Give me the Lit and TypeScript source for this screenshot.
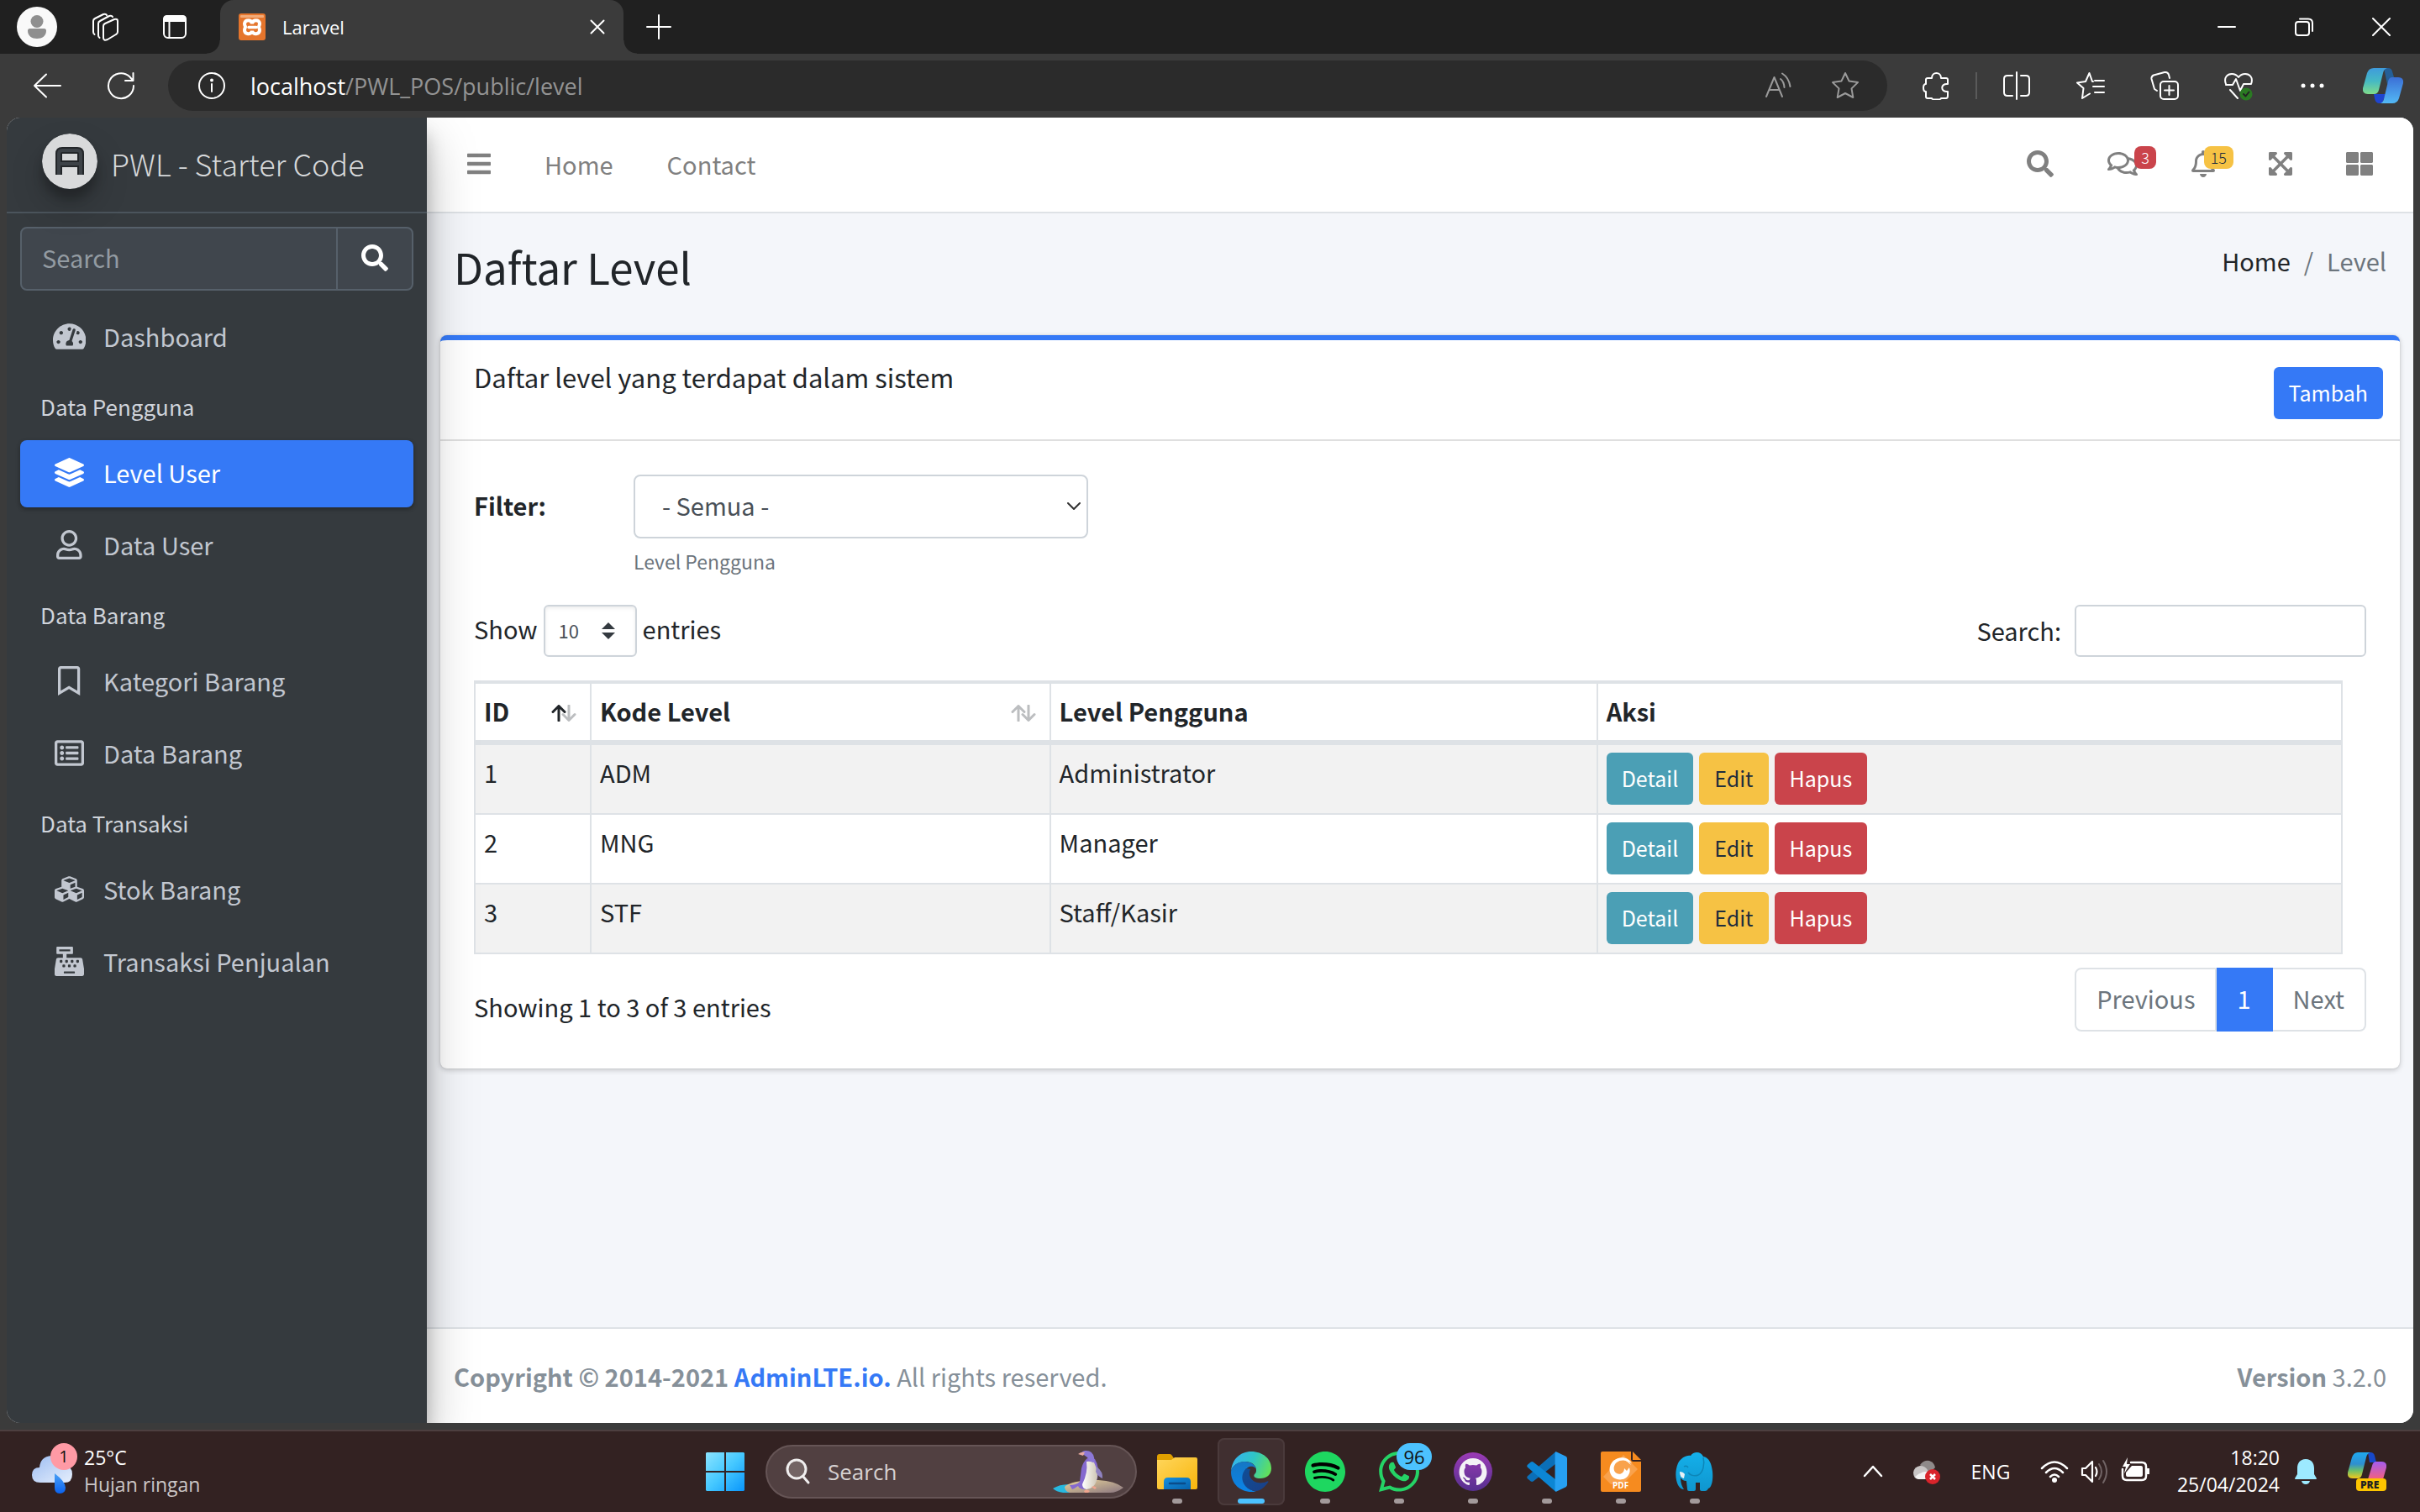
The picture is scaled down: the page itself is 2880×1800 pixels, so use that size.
import { LitElement, html, svg, css, nothing } from "lit";
import { customElement } from "lit/decorators.js";

/* ---------- Solid and outline glyphs, drawn on a W x 512 grid ---------- */
const GLYPHS: Record<string, [number, string]> = {
  search: [512, "M505 442.7L405.3 343c-4.5-4.5-10.6-7-17-7H372c27.6-35.3 44-79.7 44-128C416 93.1 322.9 0 208 0S0 93.1 0 208s93.1 208 208 208c48.3 0 92.7-16.4 128-44v16.3c0 6.4 2.5 12.5 7 17l99.7 99.7c9.4 9.4 24.6 9.4 33.9 0l28.3-28.3c9.4-9.4 9.4-24.6.1-34zM208 336c-70.7 0-128-57.2-128-128 0-70.7 57.2-128 128-128 70.7 0 128 57.2 128 128 0 70.7-57.2 128-128 128z"],
  bars: [448, "M16 132h416c8.837 0 16-7.163 16-16V76c0-8.837-7.163-16-16-16H16C7.163 60 0 67.163 0 76v40c0 8.837 7.163 16 16 16zm0 160h416c8.837 0 16-7.163 16-16v-40c0-8.837-7.163-16-16-16H16c-8.837 0-16 7.163-16 16v40c0 8.837 7.163 16 16 16zm0 160h416c8.837 0 16-7.163 16-16v-40c0-8.837-7.163-16-16-16H16c-8.837 0-16 7.163-16 16v40c0 8.837 7.163 16 16 16z"],
  grid: [512, "M296 32h192c13.255 0 24 10.745 24 24v160c0 13.255-10.745 24-24 24H296c-13.255 0-24-10.745-24-24V56c0-13.255 10.745-24 24-24zm-80 0H24C10.745 32 0 42.745 0 56v160c0 13.255 10.745 24 24 24h192c13.255 0 24-10.745 24-24V56c0-13.255-10.745-24-24-24zM0 296v160c0 13.255 10.745 24 24 24h192c13.255 0 24-10.745 24-24V296c0-13.255-10.745-24-24-24H24c-13.255 0-24 10.745-24 24zm296 184h192c13.255 0 24-10.745 24-24V296c0-13.255-10.745-24-24-24H296c-13.255 0-24 10.745-24 24v160c0 13.255 10.745 24 24 24z"],
  expand: [448, "M448 344v112a23.94 23.94 0 0 1-24 24H312c-21.39 0-32.09-25.9-17-41l36.2-36.2L224 295.6 116.77 402.9 153 439c15.09 15.1 4.39 41-17 41H24a23.94 23.94 0 0 1-24-24V344c0-21.4 25.89-32.1 41-17l36.19 36.2L184.46 256 77.18 148.7 41 185c-15.1 15.1-41 4.4-41-17V56a23.94 23.94 0 0 1 24-24h112c21.39 0 32.09 25.9 17 41l-36.2 36.2L224 216.4l107.23-107.3L295 73c-15.09-15.1-4.39-41 17-41h112a23.94 23.94 0 0 1 24 24v112c0 21.4-25.89 32.1-41 17l-36.19-36.2L263.54 256l107.28 107.3L407 327.1c15.1-15.2 41-4.5 41 16.9z"],
  bell: [448, "M439.39 362.29c-19.32-20.76-55.47-51.99-55.47-154.29 0-77.7-54.48-139.9-127.94-155.16V32c0-17.67-14.32-32-31.98-32s-31.98 14.33-31.98 32v20.84C118.56 68.1 64.08 130.3 64.08 208c0 102.3-36.15 133.53-55.47 154.29-6 6.45-8.66 14.16-8.61 21.71.11 16.4 12.98 32 32.1 32h383.8c19.12 0 32-15.6 32.1-32 .05-7.55-2.61-15.27-8.61-21.71zM67.53 368c21.22-27.97 44.42-74.33 44.53-159.42 0-.2-.06-.38-.06-.58 0-61.86 50.14-112 112-112s112 50.14 112 112c0 .2-.06.38-.06.58.11 85.1 23.31 131.46 44.53 159.42H67.53zM224 512c35.32 0 63.97-28.65 63.97-64H160.03c0 35.35 28.65 64 63.97 64z"],
  comments: [576, "M532 386.2c27.5-27.1 44-61.1 44-98.2 0-80-76.5-146.1-176.2-157.9C368.3 72.5 294.3 32 208 32 93.1 32 0 103.6 0 192c0 37 16.5 71 44 98.2-15.3 30.7-37.3 54.5-37.7 54.9-6.3 6.7-8.1 16.5-4.4 25 3.6 8.5 12 14 21.2 14 53.5 0 96.7-20.2 125.2-38.8 9.2 2.1 18.7 3.7 28.4 4.9C208.1 407.6 281.8 448 368 448c20.8 0 40.8-2.4 59.8-6.8C456.3 459.7 499.4 480 553 480c9.2 0 17.5-5.5 21.2-14 3.6-8.5 1.9-18.3-4.4-25-.4-.3-22.5-24.1-37.8-54.8zm-392.8-92.3L122.1 305c-14.1 9.1-28.5 16.3-43.1 21.4 2.7-4.7 5.4-9.7 8-14.8l15.5-31.1L77.7 256C64.2 242.6 48 220.7 48 192c0-60.7 73.3-112 160-112s160 51.3 160 112-73.3 112-160 112c-16.5 0-33-1.9-49-5.6l-19.8-4.5zM498.3 352l-24.7 24.4 15.5 31.1c2.6 5.1 5.3 10.1 8 14.8-14.6-5.1-29-12.3-43.1-21.4l-17.1-11.1-19.9 4.6c-16 3.7-32.5 5.6-49 5.6-54 0-102.2-20.1-131.3-49.7C338 339.5 416 272.9 416 192c0-3.4-.4-6.7-.7-10C479.7 196.5 528 238.8 528 288c0 28.7-16.2 50.6-29.7 64z"],
  layers: [512, "M12.41 148.02l232.94 105.67c6.8 3.09 14.49 3.09 21.29 0l232.94-105.67c16.55-7.51 16.55-32.52 0-40.03L266.65 2.31a25.607 25.607 0 0 0-21.29 0L12.41 107.98c-16.55 7.51-16.55 32.53 0 40.04zm487.18 88.28l-58.09-26.33-161.64 73.27c-7.56 3.43-15.59 5.17-23.86 5.17s-16.29-1.74-23.86-5.17L70.51 209.97l-58.1 26.33c-16.55 7.5-16.55 32.5 0 40l232.94 105.59c6.8 3.08 14.49 3.08 21.29 0L499.59 276.3c16.55-7.5 16.55-32.5 0-40zm0 127.8l-57.87-26.23-161.86 73.37c-7.56 3.43-15.59 5.17-23.86 5.17s-16.29-1.74-23.86-5.17L70.29 337.87 12.41 364.1c-16.55 7.5-16.55 32.5 0 40l232.94 105.59c6.8 3.08 14.49 3.08 21.29 0L499.59 404.1c16.55-7.5 16.55-32.5 0-40z"],
  gauge: [576, "M288 32C128.94 32 0 160.94 0 320c0 52.8 14.25 102.26 39.06 144.8 5.61 9.62 16.3 15.2 27.44 15.2h443c11.14 0 21.83-5.58 27.44-15.2C561.75 422.26 576 372.8 576 320c0-159.06-128.94-288-288-288zm0 64c14.71 0 26.58 10.13 30.32 23.65-1.11 2.26-2.64 4.23-3.45 6.67l-9.22 27.67c-5.13 3.49-10.97 6.01-17.64 6.01-17.67 0-32-14.33-32-32S270.33 96 288 96zM96 384c-17.67 0-32-14.33-32-32s14.33-32 32-32 32 14.33 32 32-14.33 32-32 32zm48-160c-17.67 0-32-14.33-32-32s14.33-32 32-32 32 14.33 32 32-14.33 32-32 32zm246.77-72.41l-61.33 184C343.13 347.33 352 364.54 352 384c0 11.72-3.38 22.55-8.88 32H232.88c-5.5-9.45-8.88-20.28-8.88-32 0-33.94 26.5-61.43 59.9-63.59l61.34-184.01c4.17-12.56 17.73-19.45 30.36-15.17 12.57 4.19 19.35 17.79 15.17 30.36zm14.66 57.2l15.52-46.55c3.47-1.29 7.13-2.23 11.05-2.23 17.67 0 32 14.33 32 32s-14.33 32-32 32c-11.38-.01-20.89-6.28-26.57-15.22zM480 384c-17.67 0-32-14.33-32-32s14.33-32 32-32 32 14.33 32 32-14.33 32-32 32z"],
  user: [448, "M313.6 304c-28.7 0-42.5 16-89.6 16-47.1 0-60.8-16-89.6-16C60.2 304 0 364.2 0 438.4V464c0 26.5 21.5 48 48 48h352c26.5 0 48-21.5 48-48v-25.6c0-74.2-60.2-134.4-134.4-134.4zM400 464H48v-25.6c0-47.6 38.8-86.4 86.4-86.4 14.6 0 38.3 16 89.6 16 51.7 0 74.9-16 89.6-16 47.6 0 86.4 38.8 86.4 86.4V464zM224 288c79.5 0 144-64.5 144-144S303.5 0 224 0 80 64.5 80 144s64.5 144 144 144zm0-240c52.9 0 96 43.1 96 96s-43.1 96-96 96-96-43.1-96-96 43.1-96 96-96z"],
  bookmark: [384, "M336 0H48C21.49 0 0 21.49 0 48v464l192-112 192 112V48c0-26.51-21.49-48-48-48zm0 428.43l-144-84-144 84V54a6 6 0 0 1 6-6h276c3.314 0 6 2.683 6 5.996V428.43z"],
  list: [512, "M464 32H48C21.49 32 0 53.49 0 80v352c0 26.51 21.49 48 48 48h416c26.51 0 48-21.49 48-48V80c0-26.51-21.49-48-48-48zm-6 400H54a6 6 0 0 1-6-6V86a6 6 0 0 1 6-6h404a6 6 0 0 1 6 6v340a6 6 0 0 1-6 6zm-42-92v24c0 6.627-5.373 12-12 12H204c-6.627 0-12-5.373-12-12v-24c0-6.627 5.373-12 12-12h200c6.627 0 12 5.373 12 12zm0-96v24c0 6.627-5.373 12-12 12H204c-6.627 0-12-5.373-12-12v-24c0-6.627 5.373-12 12-12h200c6.627 0 12 5.373 12 12zm0-96v24c0 6.627-5.373 12-12 12H204c-6.627 0-12-5.373-12-12v-24c0-6.627 5.373-12 12-12h200c6.627 0 12 5.373 12 12zm-252 12c0 19.882-16.118 36-36 36s-36-16.118-36-36 16.118-36 36-36 36 16.118 36 36zm0 96c0 19.882-16.118 36-36 36s-36-16.118-36-36 16.118-36 36-36 36 16.118 36 36zm0 96c0 19.882-16.118 36-36 36s-36-16.118-36-36 16.118-36 36-36 36 16.118 36 36z"],
  cubes: [512, "M488.6 250.2L392 214V105.5c0-15-9.3-28.4-23.4-33.7l-100-37.5c-8.1-3.1-17.1-3.1-25.3 0l-100 37.5c-14.1 5.3-23.4 18.7-23.4 33.7V214l-96.6 36.2C9.3 255.5 0 268.9 0 283.9V394c0 13.6 7.7 26.1 19.9 32.2l100 50c10.1 5.1 22.1 5.1 32.2 0l103.9-52 103.9 52c10.1 5.1 22.1 5.1 32.2 0l100-50c12.2-6.1 19.9-18.6 19.9-32.2V283.9c0-15-9.3-28.4-23.4-33.7zM358 214.8l-85 31.9v-68.2l85-37v73.3zM154 104.1l102-38.2 102 38.2v.6l-102 41.4-102-41.4v-.6zm84 291.1l-85 42.5v-79.1l85-38.8v75.4zm0-112l-102 41.4-102-41.4v-.6l102-38.2 102 38.2v.6zm240 112l-85 42.5v-79.1l85-38.8v75.4zm0-112l-102 41.4-102-41.4v-.6l102-38.2 102 38.2v.6z"],
  register: [512, "M511.1 378.8l-26.7-160c-2.6-15.4-15.9-26.7-31.6-26.7H208v-64h96c8.8 0 16-7.2 16-16V16c0-8.8-7.2-16-16-16H48c-8.8 0-16 7.2-16 16v96c0 8.8 7.2 16 16 16h96v64H59.1c-15.6 0-29 11.3-31.6 26.7L.8 378.7c-.6 3.5-.9 7-.9 10.5V480c0 17.7 14.3 32 32 32h448c17.7 0 32-14.3 32-32v-90.7c.1-3.5-.2-7-.8-10.5zM280 248c0-8.8 7.2-16 16-16h16c8.8 0 16 7.2 16 16v16c0 8.8-7.2 16-16 16h-16c-8.8 0-16-7.2-16-16v-16zm-32 64h16c8.8 0 16 7.2 16 16v16c0 8.8-7.2 16-16 16h-16c-8.8 0-16-7.2-16-16v-16c0-8.8 7.2-16 16-16zm-32-80c8.8 0 16 7.2 16 16v16c0 8.8-7.2 16-16 16h-16c-8.8 0-16-7.2-16-16v-16c0-8.8 7.2-16 16-16h16zM80 80V48h192v32H80zm40 200h-16c-8.8 0-16-7.2-16-16v-16c0-8.8 7.2-16 16-16h16c8.8 0 16 7.2 16 16v16c0 8.8-7.2 16-16 16zm16 64v-16c0-8.8 7.2-16 16-16h16c8.8 0 16 7.2 16 16v16c0 8.8-7.2 16-16 16h-16c-8.8 0-16-7.2-16-16zm216 112c0 4.4-3.6 8-8 8H168c-4.4 0-8-3.6-8-8v-16c0-4.4 3.6-8 8-8h176c4.4 0 8 3.6 8 8v16zm24-112c0 8.8-7.2 16-16 16h-16c-8.8 0-16-7.2-16-16v-16c0-8.8 7.2-16 16-16h16c8.8 0 16 7.2 16 16v16zm48-80c0 8.8-7.2 16-16 16h-16c-8.8 0-16-7.2-16-16v-16c0-8.8 7.2-16 16-16h16c8.8 0 16 7.2 16 16v16z"],
};

const glyph = (name: string) => {
  const [w, d] = GLYPHS[name];
  return html`<svg class="glyph" viewBox="0 0 ${w} 512" fill="currentColor" aria-hidden="true"><path d=${d}></path></svg>`;
};

/* Line icon on a square grid, sized in pixels. */
const line = (size: number, body: unknown) =>
  html`<svg class="line" width=${size} height=${size} viewBox="0 0 ${size} ${size}" aria-hidden="true">${body}</svg>`;

const base = css`
  *, *::before, *::after { box-sizing: border-box; }
  button, input, select { font: inherit; color: inherit; margin: 0; }
  button { border: 0; background: none; padding: 0; }
  a { color: inherit; text-decoration: none; }
  svg { display: block; flex: none; }
  .line { fill: none; stroke: currentColor; stroke-width: 2; stroke-linecap: round; stroke-linejoin: round; }
`;

/* ======================= Browser frame ======================= */
@customElement("browser-bar")
class BrowserBar extends LitElement {
  static styles = [base, css`
    :host { display: block; font-family: "Open Sans", "Noto Sans", sans-serif; color: #fff; }
    .titlebar { display: flex; height: 64px; background: #202020; }
    .cell { display: grid; place-items: center; flex: none; }
    .w72 { width: 72px; }
    .w80 { width: 80px; }
    .w84 { width: 84px; }
    .w88 { width: 88px; }
    .w92 { width: 92px; }
    .w96 { width: 96px; }
    .tab { position: relative; display: flex; align-items: center; width: 480px; margin-left: 6px; padding: 0 22px; background: #3b3b3b; border-radius: 16px 16px 0 0; font-size: 22px; }
    .tab::before, .tab::after { content: ""; position: absolute; bottom: 0; width: 16px; height: 16px; }
    .tab::before { left: -16px; background: radial-gradient(circle at 0 0, transparent 15px, #3b3b3b 16px); }
    .tab::after { right: -16px; background: radial-gradient(circle at 100% 0, transparent 15px, #3b3b3b 16px); }
    .tab-title { flex: 1; margin-left: 20px; }
    .spacer { flex: 1; }
    .toolbar { display: flex; align-items: center; height: 76px; padding: 0 4px 0 12px; background: #3b3b3b; }
    .address { display: flex; align-items: center; flex: 1; height: 60px; margin: 0 14px 0 12px; padding: 0 10px 0 36px; border-radius: 30px; background: #2b2b2b; font-size: 27px; }
    .url { flex: 1; margin-left: 30px; color: #939393; }
    .host { color: #fff; }
    .muted { color: #9a9a9a; }
    .divider { width: 2px; height: 32px; margin: 0 3px; background: #5a5a5a; }
  `];

  render() {
    return html`
      <div class="titlebar">
        <button class="cell w88" aria-label="Profile">
          <svg width="48" height="48" viewBox="0 0 48 48"><circle cx="24" cy="24" r="24" fill="#f9f9f9"></circle><circle cx="24" cy="17.500" r="7.500" fill="#8f8f8f"></circle><path d="M13 28.500q0-2.500 2.500-2.500h17q2.500 0 2.500 2.500C35 35 30 38 24 38S13 35 13 28.500Z" fill="#8f8f8f"></path></svg>
        </button>
        <button class="cell w72" aria-label="Workspaces">
          ${line(34, svg`<path d="M16 16q0-2 2-3l11-5q4-1 4 2v13q0 2-2 3l-10 6q-5 2-5-2ZM10 27V13q0-2 2-3l11-6q3-1 4 1M4 23V10q0-2 2-3l10-5q3-1 4 1M4 23q0 2 1.500 3M10 27q0 2 1.500 3"></path>`)}
        </button>
        <button class="cell w96" aria-label="Tab actions">
          ${line(30, svg`<rect x="2" y="2" width="26" height="26" rx="5"></rect><path d="M2 8V6q0-4 4-4h18q4 0 4 4v2Z" fill="currentColor"></path><path d="M8.500 8v20"></path>`)}
        </button>
        <div class="tab">
          <svg width="32" height="32" viewBox="0 0 32 32"><rect width="32" height="32" rx="3" fill="#e5752c"></rect><rect x="2" y="2" width="28" height="3" rx="1" fill="#f2ab78"></rect><path d="M16 12c-1-5-8-5-9 0 0 3 1 3 1 4s-1 2-1 4c0 5 8 6 9 1 1 5 9 4 9-1 0-2-1-3-1-4s1-2 1-4c0-5-8-5-9 0Z" fill="none" stroke="#fff" stroke-width="4"></path><path d="M12 16.500h9" stroke="#fff" stroke-width="3.500" stroke-linecap="round"></path></svg>
          <span class="tab-title">Laravel</span>
          <button aria-label="Close tab">${line(18, svg`<path d="M1.500 1.500l15 15M16.500 1.500l-15 15"></path>`)}</button>
        </div>
        <button class="cell w84" aria-label="New tab">${line(30, svg`<path d="M15 1v28M1 15h28"></path>`)}</button>
        <div class="spacer"></div>
        <button class="cell w92" aria-label="Minimize">${line(22, svg`<path d="M1 11h20"></path>`)}</button>
        <button class="cell w92" aria-label="Restore">${line(22, svg`<rect x="1" y="5" width="16" height="16" rx="3"></rect><path d="M6 1.500h10q5 0 5 5V16"></path>`)}</button>
        <button class="cell w92" aria-label="Close">${line(22, svg`<path d="M1 1l20 20M21 1 1 21"></path>`)}</button>
      </div>
      <div class="toolbar">
        <button class="cell w88" aria-label="Back">${line(34, svg`<path d="M33 17H2M16 3.500 2 17l14 13.500"></path>`)}</button>
        <button class="cell w88" aria-label="Refresh">${line(34, svg`<path d="M32 17A15 15 0 1 1 27 6l4 4.500M31.500 2v9H22"></path>`)}</button>
        <div class="address">
          ${line(32, svg`<circle cx="16" cy="16" r="15"></circle><path d="M16 14v9"></path><circle cx="16" cy="9.500" r="1" fill="currentColor"></circle>`)}
          <span class="url"><span class="host">localhost</span>/PWL_POS/public/level</span>
          <button class="cell w80 muted" aria-label="Read aloud">${line(32, svg`<path d="M2 29 11.500 6 21 29M5.500 21h12M19 8q4 3 4.500 10M21 1.500q8 5 9.500 15.500"></path>`)}</button>
          <button class="cell w80 muted" aria-label="Add to favorites">${line(34, svg`<path d="M17 2l4.600 9.600 10.400 1.500-7.500 7.300 1.800 10.600L17 26l-9.300 5 1.800-10.600L2 13.100l10.400-1.500Z"></path>`)}</button>
        </div>
        <button class="cell w88" aria-label="Extensions">${line(34, svg`<path d="M7 8h5c0-8 11-8 11 0h6q2 0 2 2v5c-9-1-9 10 0 9v5q0 3-2 3h-6c0 2-11 2-11 0H7q-2 0-2-2v-6c-4 0-4-9 0-9v-5q0-2 2-2Z"></path>`)}</button>
        <span class="divider"></span>
        <button class="cell w88" aria-label="Split screen">${line(34, svg`<path d="M17 1v32M12 5H6Q2 5 2 9v16q0 4 4 4h6M22 5h6q4 0 4 4v16q0 4-4 4h-6"></path>`)}</button>
        <button class="cell w88" aria-label="Favorites">${line(34, svg`<path d="M20 12h-1L15.500 2 11 12 1 13.500 8.500 20 7 32l9-5.500M22 11h11M20 18h13M22 25h11"></path>`)}</button>
        <button class="cell w88" aria-label="Collections">${line(34, svg`<rect x="12" y="12" width="21" height="21" rx="4"></rect><path d="M22.500 17v11M17 22.500h11M8 23 5 21 1.500 9Q1 6 4 4.500L17 1q4-.5 5 3l1 4"></path>`)}</button>
        <button class="cell w88" aria-label="Browser essentials">${line(36, svg`<path d="M3 16C0 8 5 4 10 4q5 0 8 4 3-4 8-4c5 0 10 4 7 12M3 17h8l4-7 5 14 4-8h9M8 23l9 10"></path><circle cx="27" cy="28" r="7.500" fill="#2a7a22" stroke="none"></circle><path d="M24 28l2.500 2.500 4-5" stroke="#222" stroke-width="2"></path>`)}</button>
        <button class="cell w88" aria-label="Settings and more">${line(30, svg`<g fill="currentColor" stroke="none"><circle cx="4" cy="15" r="2.500"></circle><circle cx="15" cy="15" r="2.500"></circle><circle cx="26" cy="15" r="2.500"></circle></g>`)}</button>
        <button class="cell w80" aria-label="Copilot">
          <svg width="50" height="44" viewBox="0 0 50 44">
            <defs>
              <linearGradient id="ca" x1="0" y1="0" x2="0" y2="1"><stop offset="0" stop-color="#3f9bdc"></stop><stop offset=".5" stop-color="#45b9c4"></stop><stop offset="1" stop-color="#7fdb8b"></stop></linearGradient>
              <linearGradient id="cb" x1="0" y1="0" x2="0" y2="1"><stop offset="0" stop-color="#3b6fd6"></stop><stop offset="1" stop-color="#53b9f5"></stop></linearGradient>
            </defs>
            <path d="M26 1h5q4 0 5 4l2 7h7L30 20Z" fill="#255f97"></path>
            <path d="M24 43h-3q-5 0-6-6l-1-5h14Z" fill="#1f45cf"></path>
            <path d="M14 1h16q-4 1-5 6l-5 20q-1 5-6 5H7q-7 0-6-7L6 7q2-6 8-6Z" fill="url(#ca)"></path>
            <path d="M36 12h7q7 0 6 7l-5 18q-2 6-8 6H22q3-1 4-5l5-21q1-5 5-5Z" fill="url(#cb)"></path>
          </svg>
        </button>
      </div>`;
  }
}

/* ======================= Admin page ======================= */
type NavEntry = { header: string } | { label: string; icon: string; active?: boolean };

const NAV: NavEntry[] = [
  { label: "Dashboard", icon: "gauge" },
  { header: "Data Pengguna" },
  { label: "Level User", icon: "layers", active: true },
  { label: "Data User", icon: "user" },
  { header: "Data Barang" },
  { label: "Kategori Barang", icon: "bookmark" },
  { label: "Data Barang", icon: "list" },
  { header: "Data Transaksi" },
  { label: "Stok Barang", icon: "cubes" },
  { label: "Transaksi Penjualan", icon: "register" },
];

const LEVELS = [
  { id: 1, code: "ADM", name: "Administrator" },
  { id: 2, code: "MNG", name: "Manager" },
  { id: 3, code: "STF", name: "Staff/Kasir" },
];

@customElement("admin-page")
class AdminPage extends LitElement {
  static styles = [base, css`
    :host { display: flex; flex: 1; margin: 0 8px 8px; border-radius: 16px; overflow: hidden; background: #f4f6fa; color: #212529; font: 29px/48px "Noto Sans CJK JP", "Noto Sans CJK SC", sans-serif; }

    .sidebar { position: relative; z-index: 2; flex: none; width: 500px; background: #353a3e; color: #c2c7d0; box-shadow: 0 28px 56px rgba(0,0,0,.25), 0 20px 20px rgba(0,0,0,.22); }
    .brand { display: flex; align-items: center; gap: 16px; height: 114px; padding: 0 0 8px 42px; border-bottom: 2px solid #4b545c; font-size: 36px; font-weight: 300; color: #d6d8da; }
    .brand-name { padding-top: 4px; }
    .brand-logo { border-radius: 50%; box-shadow: 0 20px 40px rgba(0,0,0,.19), 0 12px 12px rgba(0,0,0,.23); }
    .side-search { display: flex; height: 76px; margin: 16px; border: 2px solid #56606a; border-radius: 8px; background: #40464d; overflow: hidden; }
    .side-search input { flex: 1; min-width: 0; border: 0; padding: 0 0 4px 24px; background: none; color: #fff; }
    .side-search input::placeholder { color: #939ba2; opacity: 1; }
    .side-search button { display: grid; place-items: center; width: 90px; border-left: 2px solid #56606a; color: #fff; padding-bottom: 2px; }
    .side-search .glyph { height: 32px; }
    .menu { list-style: none; margin: 0; padding: 0 16px; }
    .menu-header { height: 76px; padding: 12px 24px; font-size: 26px; color: #d0d4db; }
    .menu-item { padding-bottom: 6px; }
    .menu-link { display: flex; align-items: center; gap: 14px; height: 80px; padding: 0 32px; border-radius: 8px; }
    .menu-link.active { background: #3579f6; color: #fff; box-shadow: 0 2px 6px rgba(0,0,0,.12), 0 2px 4px rgba(0,0,0,.24); }
    .menu-icon { display: grid; place-items: center; width: 53px; height: 40px; padding-bottom: 4px; }
    .menu-icon .glyph { height: 35px; }
    .menu-text { padding-bottom: 4px; }

    .main { display: flex; flex-direction: column; flex: 1; min-width: 0; }
    .navbar { display: flex; align-items: center; justify-content: space-between; height: 114px; padding: 0 16px; background: #fff; border-bottom: 2px solid #dee2e6; color: #808080; }
    .nav-group { display: flex; }
    .nav-link { position: relative; display: flex; align-items: center; height: 80px; padding: 0 32px 2px; }
    .nav-link .glyph { height: 32px; }
    .badge { position: absolute; top: 18px; right: 10px; padding: 0 8px; border-radius: 8px; font-size: 18px; line-height: 27px; font-weight: 300; }
    .badge.danger { background: #ca444b; color: #fff; }
    .badge.warning { background: #f6c244; color: #1f2d3d; }

    .content-header { display: flex; justify-content: space-between; padding: 28px 32px 32px; }
    h1 { margin: 0; font-size: 51px; line-height: 70px; font-weight: 400; }
    .breadcrumb { display: flex; gap: 16px; margin: 0; padding: 4px 0 0; list-style: none; color: #6c757d; }
    .breadcrumb a { color: #212529; }

    .card { margin: 15px 16px 0; border-top: 6px solid #3579f6; border-radius: 8px; background: #fff; box-shadow: 0 0 2px rgba(0,0,0,.13), 0 2px 6px rgba(0,0,0,.2); }
    .card-header { display: flex; justify-content: space-between; align-items: flex-start; padding: 22px 20px 24px 40px; border-bottom: 2px solid #dfdfdf; }
    .card-title { margin: 0; font-size: 31px; line-height: 44px; font-weight: 400; }
    .btn { height: 62px; padding: 0 18px 2px; border-radius: 6px; font-size: 25px; line-height: 42px; color: #fff; }
    .btn.primary { background: #3579f6; margin-top: 10px; }
    .btn.detail { background: #4b9fb5; }
    .btn.edit { background: #f6c244; color: #1f2d3d; }
    .btn.delete { background: #ca444b; }
    .card-body { padding: 40px; }

    .filter { display: grid; grid-template-columns: 190px minmax(0, 541px); margin-bottom: 32px; }
    .filter label { padding-top: 12px; font-weight: 700; }
    .select { position: relative; display: block; }
    .select select { width: 100%; appearance: none; border: 2px solid #ced4da; border-radius: 8px; background: #fff; color: #495057; }
    .select svg { position: absolute; pointer-events: none; }
    .select.large select { height: 76px; padding: 0 32px 4px; }
    .select.large svg { right: 8px; top: 32px; color: #303030; }
    .help { margin-top: 8px; font-size: 23px; line-height: 39px; color: #6c757d; }

    .controls { display: flex; justify-content: space-between; align-items: center; height: 62px; margin-bottom: 28px; }
    .length { display: flex; align-items: center; gap: 7px; }
    .length label { padding-bottom: 6px; }
    .select.small { width: 111px; }
    .select.small select { display: block; height: 62px; padding: 0 16px 2px; border-radius: 6px; font-size: 22px; box-shadow: inset 0 2px 4px rgba(0,0,0,.08); }
    .select.small svg { right: 26px; top: 21px; }
    .finder { display: flex; align-items: center; gap: 16px; }
    .finder label { padding-bottom: 2px; }
    .finder input { width: 347px; height: 62px; padding: 0 16px; border: 2px solid #ced4da; border-radius: 6px; background: #fff; }

    .table-wrap { padding-right: 28px; }
    table { width: 100%; table-layout: fixed; border-collapse: separate; border-spacing: 0; border-top: 2px solid #dee2e6; border-right: 2px solid #dee2e6; }
    .c-id { width: 138px; }
    .c-code { width: 24.6%; }
    .c-name { width: 29.3%; }
    th, td { padding: 8px 10px 11px; border-left: 2px solid #dee2e6; border-bottom: 2px solid #dee2e6; text-align: left; vertical-align: top; }
    th { border-top: 2px solid #dee2e6; border-bottom-width: 6px; font-weight: 700; }
    td:last-child { padding: 9px 10px 10px; }
    tbody tr:nth-child(odd) { background: #f2f2f2; }
    .th-inner { display: flex; justify-content: space-between; align-items: center; padding-right: 6px; }
    .sort { color: #bcbec0; stroke-width: 3; margin-top: 6px; }
    .sort .on { stroke: #212529; }
    .actions { display: flex; gap: 7px; }

    .summary { display: flex; justify-content: space-between; align-items: center; margin-top: 16px; padding-bottom: 4px; }
    .status { padding-top: 16px; }
    .pages { display: flex; margin: 0; padding: 0; list-style: none; color: #6c757d; }
    .page { display: block; height: 76px; padding: 10px 24px; border: 2px solid #dee2e6; border-left-width: 0; background: #fff; }
    .page.first { border-left-width: 2px; border-radius: 8px 0 0 8px; }
    .page.last { border-radius: 0 8px 8px 0; }
    .page.current { border-color: #3579f6; background: #3579f6; color: #fff; }

    .spacer { flex: 1; }
    .footer { display: flex; justify-content: space-between; height: 114px; padding: 32px; background: #fff; border-top: 2px solid #dee2e6; color: #869099; }
    .footer a { color: #3579f6; }
  `];

  private navEntry(e: NavEntry) {
    if ("header" in e) return html`<li class="menu-header">${e.header}</li>`;
    return html`<li class="menu-item">
      <a class="menu-link ${e.active ? "active" : ""}" href="#"><span class="menu-icon">${glyph(e.icon)}</span><span class="menu-text">${e.label}</span></a>
    </li>`;
  }

  private sort(ascending: boolean) {
    return html`<svg class="line sort" width="30" height="20" viewBox="0 0 30 20" aria-hidden="true">
      <path d="M21 1v17M14 11.500l7 7 7-7"></path><path class=${ascending ? "on" : ""} d="M9 19V2M2 8.500l7-7 7 7"></path></svg>`;
  }

  render() {
    return html`
      <aside class="sidebar">
        <a class="brand" href="#">
          <svg class="brand-logo" width="66" height="66" viewBox="0 0 66 66"><circle cx="33" cy="33" r="33" fill="#d9dadb"></circle><path d="M20 49V24q0-4 4-4h18q4 0 4 4v25M20 36h26" fill="none" stroke="#232629" stroke-width="8"></path><path d="M20 49V24q0-4 4-4h18q4 0 4 4v25M20 36h26" fill="none" stroke="#3d4247" stroke-width="4"></path></svg>
          <span class="brand-name">PWL - Starter Code</span>
        </a>
        <form class="side-search"><input type="search" placeholder="Search" aria-label="Search"><button type="button" aria-label="Search">${glyph("search")}</button></form>
        <ul class="menu">${NAV.map((e) => this.navEntry(e))}</ul>
      </aside>
      <div class="main">
        <nav class="navbar">
          <div class="nav-group">
            <a class="nav-link" href="#" aria-label="Menu">${glyph("bars")}</a>
            <a class="nav-link" href="#">Home</a>
            <a class="nav-link" href="#">Contact</a>
          </div>
          <div class="nav-group">
            <a class="nav-link" href="#" aria-label="Search">${glyph("search")}</a>
            <a class="nav-link" href="#">${glyph("comments")}<span class="badge danger">3</span></a>
            <a class="nav-link" href="#">${glyph("bell")}<span class="badge warning">15</span></a>
            <a class="nav-link" href="#" aria-label="Fullscreen">${glyph("expand")}</a>
            <a class="nav-link" href="#" aria-label="Panels">${glyph("grid")}</a>
          </div>
        </nav>
        <header class="content-header">
          <h1>Daftar Level</h1>
          <ol class="breadcrumb"><li><a href="#">Home</a></li><li>/</li><li>Level</li></ol>
        </header>
        <section class="card">
          <div class="card-header">
            <h3 class="card-title">Daftar level yang terdapat dalam sistem</h3>
            <button class="btn primary">Tambah</button>
          </div>
          <div class="card-body">
            <div class="filter">
              <label for="level">Filter:</label>
              <div>
                <span class="select large">
                  <select id="level"><option>- Semua -</option></select>
                  <svg class="line" width="18" height="12" viewBox="0 0 18 12"><path d="M2 2l7 7 7-7"></path></svg>
                </span>
                <div class="help">Level Pengguna</div>
              </div>
            </div>
            <div class="controls">
              <div class="length">
                <label for="length">Show</label>
                <span class="select small">
                  <select id="length"><option>10</option></select>
                  <svg width="16" height="20" viewBox="0 0 16 20"><path d="M0 8 8 0l8 8ZM0 12l8 8 8-8Z" fill="#343a40"></path></svg>
                </span>
                <label for="length">entries</label>
              </div>
              <div class="finder"><label for="find">Search:</label><input id="find" type="search"></div>
            </div>
            <div class="table-wrap">
              <table>
                <colgroup><col class="c-id"><col class="c-code"><col class="c-name"><col></colgroup>
                <thead><tr>
                  <th><div class="th-inner">ID ${this.sort(true)}</div></th>
                  <th><div class="th-inner">Kode Level ${this.sort(false)}</div></th>
                  <th>Level Pengguna</th>
                  <th>Aksi</th>
                </tr></thead>
                <tbody>${LEVELS.map((r) => html`<tr>
                  <td>${r.id}</td><td>${r.code}</td><td>${r.name}</td>
                  <td><div class="actions"><button class="btn detail">Detail</button><button class="btn edit">Edit</button><button class="btn delete">Hapus</button></div></td>
                </tr>`)}</tbody>
              </table>
            </div>
            <div class="summary">
              <div class="status">Showing 1 to 3 of 3 entries</div>
              <ul class="pages">
                <li><a class="page first" href="#">Previous</a></li>
                <li><a class="page current" href="#">1</a></li>
                <li><a class="page last" href="#">Next</a></li>
              </ul>
            </div>
          </div>
        </section>
        <div class="spacer"></div>
        <footer class="footer">
          <span><strong>Copyright © 2014-2021 <a href="#">AdminLTE.io.</a></strong> All rights reserved.</span>
          <span><strong>Version</strong> 3.2.0</span>
        </footer>
      </div>`;
  }
}

/* ======================= Taskbar ======================= */
const APPS = {
  folder: html`<svg width="48" height="48" viewBox="0 0 48 48"><defs><linearGradient id="fo" x1="0" y1="0" x2="1" y2="1"><stop offset="0" stop-color="#ffd65c"></stop><stop offset="1" stop-color="#f8b60c"></stop></linearGradient><linearGradient id="fp" x1="0" y1="0" x2="1" y2="1"><stop offset="0" stop-color="#1490df"></stop><stop offset="1" stop-color="#0862ab"></stop></linearGradient></defs><path d="M0 6q0-3 3-3h12q2 0 3 2l2 3v6H0Z" fill="#e0a000"></path><path d="M0 10h17l4-3h25q2 0 2 2v34q0 2-2 2H2q-2 0-2-2Z" fill="url(#fo)"></path><path d="M8 45V36q0-5 5-5h22q5 0 5 5v9Z" fill="url(#fp)"></path><path d="M15 38h18" stroke="#0a4c8a" stroke-width="2.500" stroke-linecap="round"></path></svg>`,
  edge: html`<svg width="48" height="48" viewBox="0 0 48 48"><defs>
    <linearGradient id="e1" x1="0" y1=".3" x2="1" y2=".6"><stop offset="0" stop-color="#35b3f0"></stop><stop offset=".5" stop-color="#2fc5c5"></stop><stop offset="1" stop-color="#62e05a"></stop></linearGradient>
    <linearGradient id="e2" x1="0" y1="0" x2="0" y2="1"><stop offset="0" stop-color="#1577c4"></stop><stop offset="1" stop-color="#0a84e8"></stop></linearGradient>
    <linearGradient id="e3" x1="0" y1="0" x2="1" y2="1"><stop offset="0" stop-color="#0f4e96"></stop><stop offset="1" stop-color="#1b3f86"></stop></linearGradient></defs>
    <path d="M0 24C1 9 11 0 24 0c14 0 24 9 24 20 0 8-6 12-13 12-6 0-9-2-7-5 2-2 2-3 2-5 0-6-6-10-13-10C8 12 1 17 0 24Z" fill="url(#e1)"></path>
    <path d="M0 24C1 17 8 12 16 12c7 0 14 4 14 10 0-3-4-5-8-4-6 2-9 10-6 18 2 6 7 10 14 12C12 50 0 39 0 24Z" fill="url(#e2)"></path>
    <path d="M18 20c-6 6-6 15-1 21 5 6 12 7 17 5 4-2 7-5 10-9 1-2 0-2-2-1-12 5-24-4-19-15Z" fill="url(#e3)"></path></svg>`,
  spotify: html`<svg width="48" height="48" viewBox="0 0 24 24"><circle cx="12" cy="12" r="11.500" fill="#000"></circle><path fill="#1ed760" d="M12 0C5.400 0 0 5.400 0 12s5.400 12 12 12 12-5.400 12-12S18.660 0 12 0zm5.521 17.340c-.24.359-.66.48-1.021.24-2.820-1.740-6.360-2.101-10.561-1.141-.418.122-.779-.179-.899-.539-.12-.421.18-.78.54-.9 4.560-1.021 8.520-.6 11.640 1.320.42.18.479.659.301 1.020zm1.440-3.300c-.301.42-.841.6-1.262.3-3.239-1.980-8.159-2.580-11.939-1.380-.479.12-1.020-.12-1.140-.6-.12-.48.12-1.021.6-1.141C9.600 9.900 15 10.561 18.720 12.840c.361.181.54.78.241 1.200zm.12-3.360C15.240 8.400 8.820 8.160 5.160 9.301c-.6.179-1.200-.181-1.380-.721-.18-.601.18-1.200.72-1.381 4.260-1.260 11.280-1.020 15.721 1.621.539.3.719 1.020.419 1.560-.299.421-1.020.599-1.559.3z"></path></svg>`,
  whatsapp: html`<svg width="48" height="48" viewBox="0 32 448 448"><path fill="#25d366" d="M380.9 97.1C339 55.1 283.2 32 223.9 32c-122.4 0-222 99.6-222 222 0 39.1 10.2 77.3 29.6 111L0 480l117.7-30.9c32.4 17.7 68.9 27 106.1 27h.1c122.3 0 224.1-99.6 224.1-222 0-59.3-25.2-115-67.1-157zm-157 341.6c-33.2 0-65.7-8.900-94-25.700l-6.700-4-69.800 18.300L72 359.200l-4.400-7c-18.500-29.400-28.200-63.300-28.200-98.200 0-101.700 82.800-184.500 184.600-184.500 49.300 0 95.600 19.200 130.400 54.100 34.800 34.900 56.200 81.200 56.100 130.500 0 101.800-84.900 184.600-186.600 184.600zm101.200-138.200c-5.500-2.800-32.800-16.200-37.900-18-5.100-1.900-8.800-2.800-12.500 2.800-3.700 5.600-14.300 18-17.600 21.800-3.200 3.700-6.500 4.200-12 1.400-32.600-16.300-54-29.100-75.500-66-5.700-9.800 5.700-9.100 16.300-30.300 1.800-3.700.9-6.900-.5-9.700-1.400-2.800-12.500-30.100-17.100-41.200-4.500-10.800-9.100-9.300-12.500-9.500-3.200-.2-6.900-.2-10.600-.2-3.700 0-9.700 1.400-14.800 6.900-5.100 5.600-19.400 19-19.400 46.300 0 27.300 19.900 53.700 22.600 57.400 2.800 3.700 39.100 59.700 94.800 83.800 35.200 15.200 49 16.500 66.600 13.900 10.700-1.600 32.800-13.400 37.400-26.400 4.600-13 4.600-24.100 3.200-26.400-1.300-2.500-5-3.900-10.500-6.600z"></path></svg>`,
  github: html`<svg width="48" height="48" viewBox="0 0 48 48"><defs><linearGradient id="gh" x1="0" y1="0" x2="0" y2="1"><stop offset="0" stop-color="#9b3bb5"></stop><stop offset="1" stop-color="#56308f"></stop></linearGradient></defs><circle cx="24" cy="24" r="23" fill="url(#gh)"></circle><g transform="translate(7.500 7.500) scale(1.375)"><path fill="#f4f2f6" d="M12 .297c-6.630 0-12 5.373-12 12 0 5.303 3.438 9.800 8.205 11.385.6.113.82-.258.82-.577 0-.285-.01-1.040-.015-2.040-3.338.724-4.042-1.610-4.042-1.610C4.422 18.070 3.633 17.700 3.633 17.700c-1.087-.744.084-.729.084-.729 1.205.084 1.838 1.236 1.838 1.236 1.070 1.835 2.809 1.305 3.495.998.108-.776.417-1.305.76-1.605-2.665-.3-5.466-1.332-5.466-5.930 0-1.310.465-2.380 1.235-3.220-.135-.303-.54-1.523.105-3.176 0 0 1.005-.322 3.300 1.230.96-.267 1.980-.399 3-.405 1.020.006 2.040.138 3 .405 2.280-1.552 3.285-1.230 3.285-1.230.645 1.653.24 2.873.12 3.176.765.84 1.230 1.910 1.230 3.220 0 4.610-2.805 5.625-5.475 5.920.42.36.81 1.096.81 2.220 0 1.606-.015 2.896-.015 3.286 0 .315.21.69.825.57C20.565 22.092 24 17.592 24 12.297c0-6.627-5.373-12-12-12"></path></g></svg>`,
  vscode: html`<svg width="48" height="48" viewBox="0 0 100 100"><path d="M72 0v30L16 74q-3 2-6 0l-8-7q-3-3 0-6Z" fill="#0b6fb8"></path><path d="M72 100V70L16 26q-3-2-6 0l-8 7q-3 3 0 6Z" fill="#0c86d4"></path><path d="M74 1 97 12q3 2 3 5v66q0 3-3 5L74 99q-4 2-4-4V5q0-6 4-4Z" fill="#27a0f2"></path></svg>`,
  pdf: html`<svg width="48" height="48" viewBox="0 0 48 48"><path d="M0 2q0-2 2-2h34v9q0 3 3 3h9v34q0 2-2 2H2q-2 0-2-2Z" fill="#f68b1f"></path><path d="M38 0l10 10H38Z" fill="#f68b1f"></path><path d="M27 4l17 17-18 18H12L3 30Z" fill="#f9a24c"></path><path d="M37 14C33 6 22 5 15 11c-6 6-6 15 0 20 6 4 15 3 18-3 2-3 2-6 1-9l-3 4-3-3c0 6-5 8-9 6-5-3-4-10 0-13 5-4 12-3 18 1Z" fill="#fff"></path><path d="M24 8q8 0 12 8-5-5-12-8Z" fill="#fff"></path><text x="14" y="44" font-size="10" font-weight="700" fill="#fff">PDF</text></svg>`,
  elephant: html`<svg width="48" height="48" viewBox="0 0 48 48"><defs><linearGradient id="el" x1="0" y1="0" x2="0" y2="1"><stop offset="0" stop-color="#14b0ea"></stop><stop offset="1" stop-color="#0f96cf"></stop></linearGradient></defs><path d="M4 14C7 8 14 4 19 5 22 0 31-1 34 6c7 1 10 9 11 18 1 10-1 19-5 20-1 2-2 3-4 3h-4q-2 0-2-2v-8h-5v8q0 2-2 2h-6q-2 0-2-2l-1-10q-5 0-7-4c0 7 2 11 4 14C3 46-2 28 4 14Z" fill="url(#el)"></path><path d="M34 7c2 8 0 18-6 21-5 2-10 0-12-3M11 18q3-2 5 1" fill="none" stroke="#0d86b8" stroke-width="1.500"></path><path d="M6 24q4 0 6 3l-1 5q-5-1-5-8Z" fill="#e8f1f5"></path></svg>`,
};

@customElement("task-bar")
class TaskBar extends LitElement {
  static styles = [base, css`
    :host { display: grid; grid-template-columns: 1fr auto 1fr; align-items: center; height: 96px; border-top: 2px solid #4d3f40; background: #332222; color: #fff; font: 23px/32px "Open Sans", "Noto Sans", sans-serif; }
    .weather { display: flex; align-items: center; gap: 6px; justify-self: start; padding: 0 0 2px 36px; text-align: left; }
    .weather-icon { position: relative; }
    .count { position: absolute; display: grid; place-items: center; border-radius: 16px; height: 32px; color: #111; }
    .weather .count { left: 24px; top: -2px; width: 32px; background: #ff9aa5; font-size: 20px; }
    .dim { color: #cbc6c6; }
    .center { display: flex; align-items: center; gap: 8px; }
    .app { position: relative; display: grid; place-items: center; width: 80px; height: 80px; border-radius: 8px; }
    .app.active { background: #402f30; box-shadow: inset 0 0 0 2px #4a3a3b; }
    .app.running::after { content: ""; position: absolute; bottom: 2px; left: 34px; width: 12px; height: 6px; border-radius: 3px; background: #a39a9b; }
    .app.active::after { left: 24px; width: 32px; background: #4cc2ff; }
    .app .count { right: 1px; top: 6px; width: 42px; background: #4cc2ff; font-size: 22px; }
    .search { display: flex; align-items: center; width: 442px; height: 64px; padding: 0 14px 0 22px; border: 2px solid #665556; border-radius: 32px; background: #514041; }
    .search input { flex: 1; min-width: 0; margin-left: 20px; padding: 0; border: 0; background: none; font-size: 26px; }
    .search input::placeholder { color: #d6d1d1; opacity: 1; }
    .tray { display: flex; align-items: center; justify-self: end; padding-right: 12px; }
    .cell { display: grid; place-items: center; height: 80px; }
    .w44 { width: 44px; }
    .w48 { width: 48px; }
    .w80 { width: 80px; }
    .w102 { width: 102px; }
    .w104 { width: 104px; }
    .clock { min-width: 157px; padding: 0 9px 2px 0; text-align: right; }
  `];

  private app(name: keyof typeof APPS, state = "running", count = "") {
    return html`<button class="app ${state}" aria-label=${name}>${APPS[name]}${count ? html`<span class="count">${count}</span>` : nothing}</button>`;
  }

  render() {
    return html`
      <button class="weather">
        <span class="weather-icon">
          <svg width="58" height="62" viewBox="0 0 58 62"><defs><linearGradient id="cl" x1="0" y1="0" x2="1" y2="1"><stop offset="0" stop-color="#9dbdf2"></stop><stop offset="1" stop-color="#e6effc"></stop></linearGradient><linearGradient id="dr" x1="0" y1="0" x2="0" y2="1"><stop offset="0" stop-color="#4aa0f5"></stop><stop offset="1" stop-color="#0a63f0"></stop></linearGradient></defs><path d="M12 45Q2 45 2 36t9-9q1-13 14-14 12 0 15 12 10 0 10 10t-9 10Z" fill="url(#cl)"></path><path d="M29 34q13 10 13 17 0 7-7 7-6 0-6-7Z" fill="url(#dr)"></path></svg>
          <span class="count">1</span>
        </span>
        <span><span>25°C</span><br><span class="dim">Hujan ringan</span></span>
      </button>
      <div class="center">
        <button class="app" aria-label="Start"><svg width="46" height="46" viewBox="0 0 46 46"><defs><linearGradient id="wn" gradientUnits="userSpaceOnUse" x1="0" y1="0" x2="46" y2="46"><stop offset="0" stop-color="#8be4ff"></stop><stop offset=".5" stop-color="#45c8ff"></stop><stop offset="1" stop-color="#0a96fb"></stop></linearGradient></defs><path d="M1 0h21v22H0V1ZM24 0h21l1 1v21H24ZM0 24h22v22H1l-1-1ZM24 24h22v21l-1 1H24Z" fill="url(#wn)"></path></svg></button>
        <label class="search">
          <svg width="30" height="32" viewBox="0 0 30 32" fill="#736464" stroke="#f0eeee" stroke-width="3" stroke-linecap="round"><circle cx="13" cy="13" r="11"></circle><path d="M21 22l6 7"></path></svg>
          <input type="search" placeholder="Search" aria-label="Search">
          <svg width="84" height="52" viewBox="0 0 84 52"><defs><linearGradient id="sd" x1="0" y1="0" x2="1" y2="1"><stop offset="0" stop-color="#e8d49a"></stop><stop offset="1" stop-color="#8a7680"></stop></linearGradient><linearGradient id="bl" x1="0" y1="0" x2="1" y2="0"><stop offset="0" stop-color="#fff"></stop><stop offset="1" stop-color="#cfc7b4"></stop></linearGradient></defs>
            <path d="M0 46q8-5 20-5l10 10H12Q4 50 0 46Z" fill="#27b9e0"></path><path d="M14 44q8-8 40-8 20 1 30 9-8 6-16 6H20q-6-2-6-7Z" fill="url(#sd)"></path>
            <path d="M20 42q8 0 12-4l2-16q2-8 7-12l9 1q6 10 3 23-4 12-14 13-8 0-9-4-4 3-7 4Z" fill="#8569cf"></path><path d="M40 14q3-1 9 1 6 12 3 22-3 9-12 10-5-1-5-6 7-14 5-27Z" fill="url(#bl)"></path><path d="M34 6Q33 2 38 1q9-1 11 8l1 6q-6 0-9-6l-4-3Z" fill="#8c78d6"></path><path d="M30 5q4-3 8-2l-2 4Z" fill="#e7a9a0"></path><path d="M52 20q8 6 7 14-5-2-8-8Z" fill="#8f82c0"></path><path d="M37 49q3-3 7 0l-2 2h-4ZM46 44q3-2 6 1l-2 2Z" fill="#f0a58e"></path></svg>
        </label>
        ${this.app("folder")}
        ${this.app("edge", "running active")}
        ${this.app("spotify")}
        ${this.app("whatsapp", "running", "96")}
        ${this.app("github")}
        ${this.app("vscode")}
        ${this.app("pdf")}
        ${this.app("elephant")}
      </div>
      <div class="tray">
        <button class="cell w80" aria-label="Hidden icons">${line(24, svg`<path d="M2 17 12 6l10 11" stroke-width="2.500"></path>`)}</button>
        <button class="cell w48" aria-label="OneDrive"><svg width="34" height="32" viewBox="0 0 34 32"><path d="M9 8q4-6 11-5 6 2 7 8l-8 8Z" fill="#8f8a8a"></path><path d="M7 25q-6-1-6-8 1-7 8-8 6 0 9 5v11Z" fill="#c9c6c6"></path><path d="M3 22q6-6 14-6v9H7q-3-1-4-3Z" fill="#f2f2f2"></path><circle cx="24" cy="22" r="9" fill="#d9242b"></circle><path d="M21 19l6 6M27 19l-6 6" stroke="#fff" stroke-width="2.500"></path></svg></button>
        <button class="cell w104">ENG</button>
        <button class="cell w48" aria-label="Network">${line(34, svg`<path d="M2 13q15-15 30 0M7 18q10-10 20 0M12 23q5-5 10 0" stroke-width="2.500"></path><circle cx="17" cy="27" r="3" fill="currentColor" stroke="none"></circle>`)}</button>
        <button class="cell w48" aria-label="Volume">${line(34, svg`<path d="M2 13h4l8-8v24l-8-8H2ZM18 12q3 5 0 10" stroke-width="2.200"></path><path d="M22 8q6 9 0 18M27 4q8 13 0 26" stroke="#716465"></path>`)}</button>
        <button class="cell w48" aria-label="Battery">${line(34, svg`<path d="M12 6h13q5 0 5 5v11q0 5-5 5H7q-5 0-5-5v-8" stroke-width="2.500"></path><path d="M13 10h11q2 0 2 2v9q0 2-2 2H8q-2 0-2-2v-3ZM31 13h3v7h-3ZM8 0 2 11h4L4 19l7-11H7Z" fill="currentColor" stroke="none"></path>`)}</button>
        <button class="clock"><span>18:20</span><br><span>25/04/2024</span></button>
        <button class="cell w44" aria-label="Notifications"><svg width="28" height="32" viewBox="0 0 28 32"><path d="M14 1c7 0 10 5 10 11v7l3 5q0 1-1 1H2q-1 0-1-1l3-5v-7C4 6 7 1 14 1ZM9 27h10q-1 4-5 4t-5-4Z" fill="#9deaff"></path></svg></button>
        <button class="cell w102" aria-label="Copilot"><svg width="46" height="48" viewBox="0 0 46 48"><defs><linearGradient id="k1" x1="0" y1="0" x2="0" y2="1"><stop offset="0" stop-color="#1fa9ef"></stop><stop offset=".45" stop-color="#2f8fd0"></stop><stop offset=".7" stop-color="#6cc06a"></stop><stop offset="1" stop-color="#f2c81b"></stop></linearGradient><linearGradient id="k2" x1="0" y1="0" x2="0" y2="1"><stop offset="0" stop-color="#a45cf0"></stop><stop offset="1" stop-color="#f4607c"></stop></linearGradient></defs>
          <path d="M24 1h3q4 0 5 4l2 8h-8Z" fill="#1748c9"></path><path d="M12 1h15q-4 1-5 6l-5 20q-1 5-5 5H6q-7 0-6-7L5 7q2-6 7-6Z" fill="url(#k1)"></path><path d="M34 12h6q7 0 6 7l-4 14H24l5-16q1-5 5-5Z" fill="url(#k2)"></path><rect x="10" y="32" width="36" height="15" rx="4" fill="#fdc400"></rect><text x="15" y="44" font-size="12" font-weight="800" fill="#222">PRE</text></svg></button>
      </div>`;
  }
}

@customElement("app-root")
class AppRoot extends LitElement {
  static styles = css`
    :host { display: flex; flex-direction: column; min-height: 100vh; background: #3b3b3b; }
  `;

  render() {
    return html`<browser-bar></browser-bar><admin-page></admin-page><task-bar></task-bar>`;
  }
}
